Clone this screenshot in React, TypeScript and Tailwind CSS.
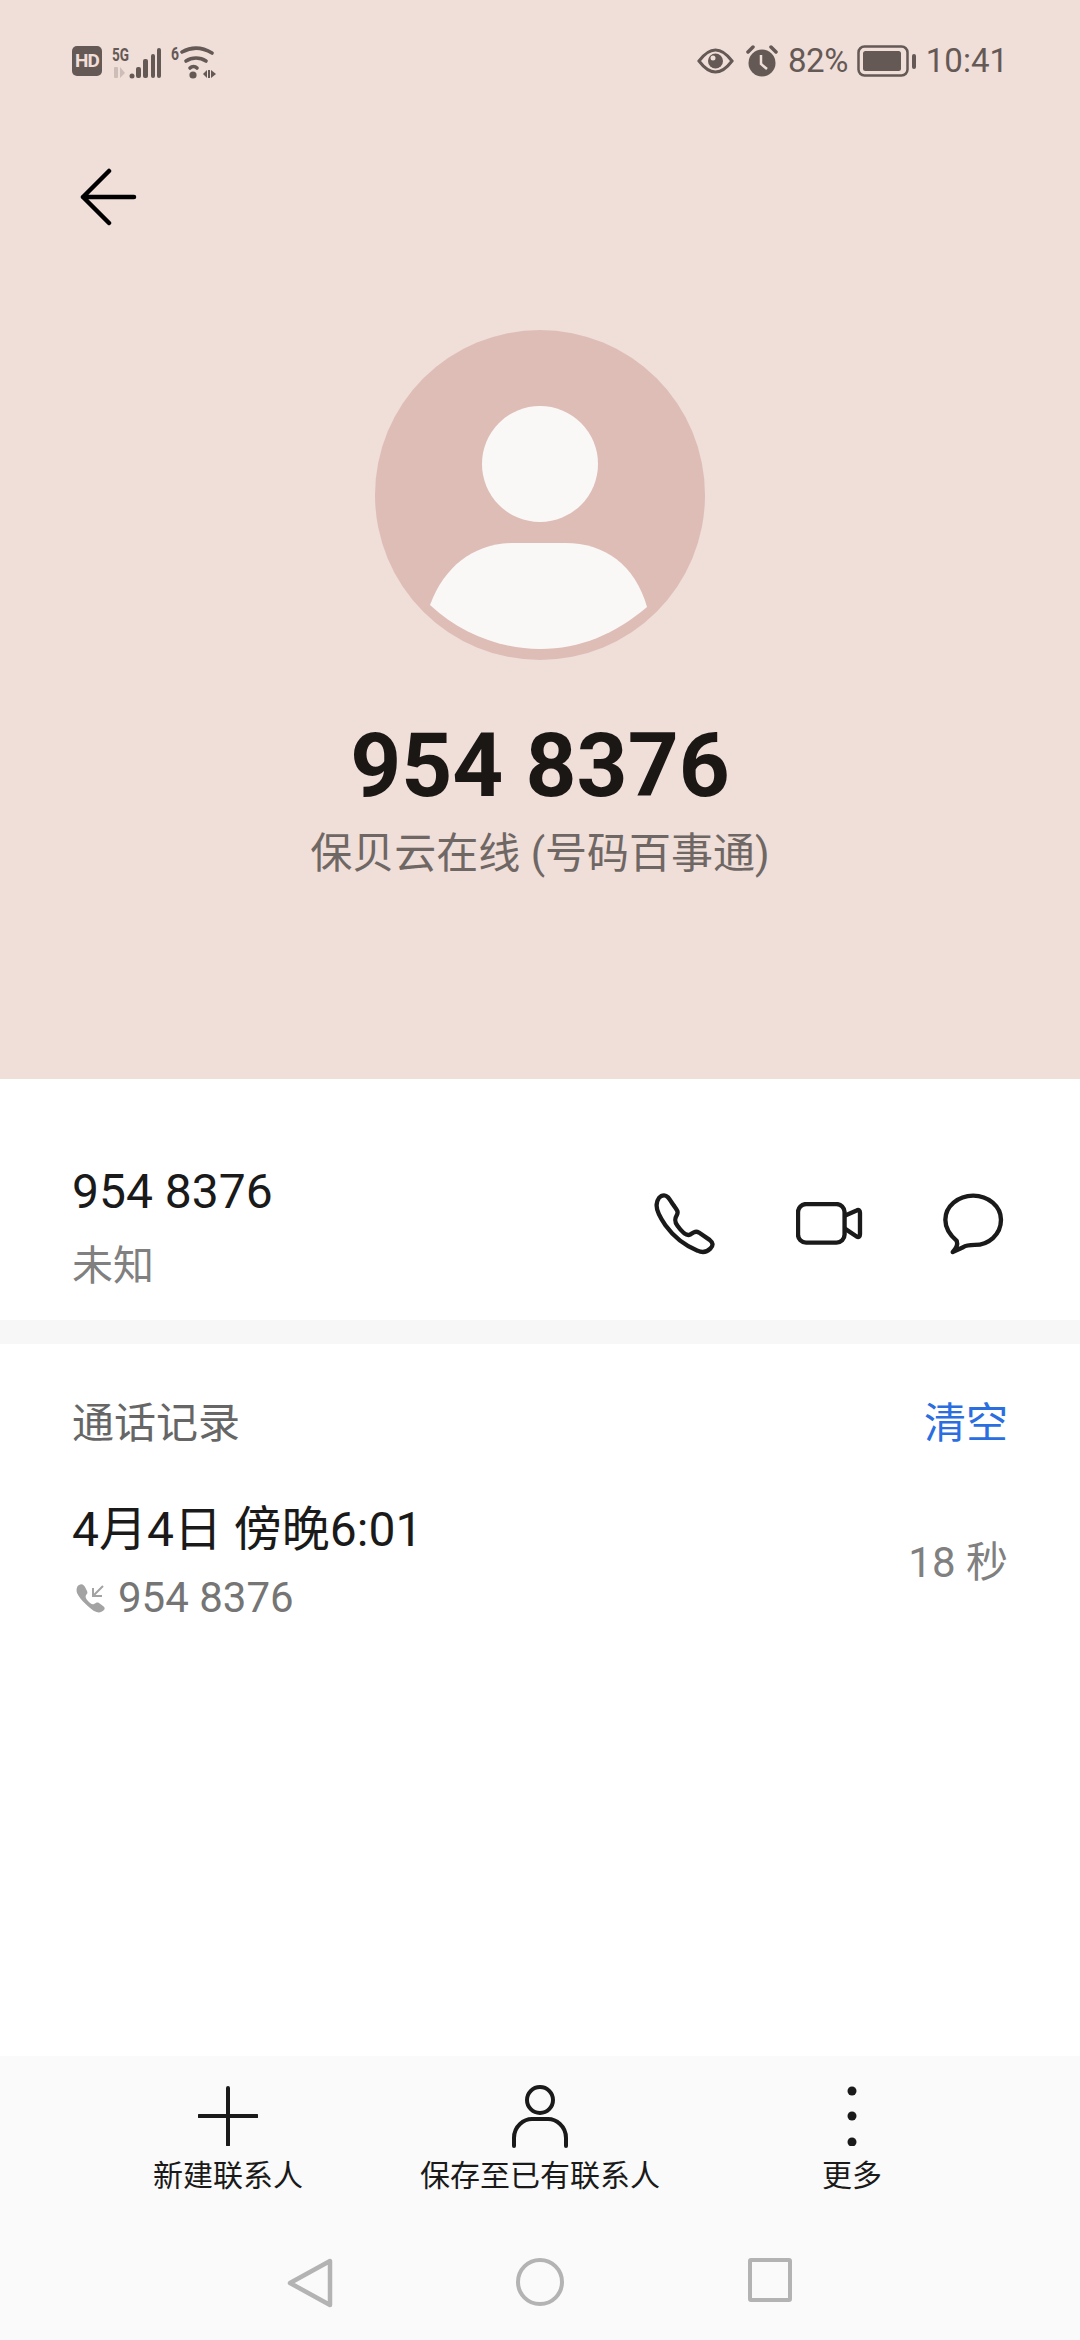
const font = { fontFamily: "Roboto, 'Noto Sans CJK SC', sans-serif" };

const StatusLeft = () => (
  <div className="flex items-center">
    <div className="w-[30px] h-[30px] rounded-[5px] bg-[#645955] text-[#f0ded9] text-[19px] leading-[30px] font-bold text-center tracking-[-1px]">
      HD
    </div>
    <svg width="50" height="38" viewBox="0 -4 50 38" className="ml-[10px]">
      <text x="0" y="15" fontSize="18" fontWeight="700" fill="#645955" textLength="17" lengthAdjust="spacingAndGlyphs">5G</text>
      <g fill="#cdbdb8">
        <rect x="2" y="21" width="4" height="11" rx="1" />
        <path d="M8 21v11l5-5z" />
      </g>
      <g fill="#645955">
        <circle cx="20" cy="30" r="2.500" />
        <rect x="24" y="21" width="5" height="11" rx="2" />
        <rect x="31" y="13" width="5" height="19" rx="2" />
        <rect x="39" y="8" width="4" height="24" rx="2" />
        <rect x="45" y="2" width="4" height="30" rx="2" />
      </g>
    </svg>
    <svg width="46" height="38" viewBox="0 -4 46 38" className="ml-[9px]">
      <text x="0" y="14" fontSize="18" fontWeight="700" fill="#645955" textLength="8" lengthAdjust="spacingAndGlyphs">6</text>
      <g fill="none" stroke="#645955" strokeWidth="3.600" strokeLinecap="round">
        <path d="M11 6c9-5 20-5 30 1" />
        <path d="M15 15c6-4 14-4 20 0" />
        <path d="M19 22c2-2 5-2 7 0" />
      </g>
      <circle cx="22" cy="29" r="3.600" fill="#645955" />
      <path d="M32 28l4-4v8zM37 24h2v8h-2zM40 24l5 4-5 4z" fill="#645955" />
    </svg>
  </div>
);

const StatusRight = () => (
  <div className="flex items-center text-[33px] leading-[40px] text-[#645955]">
    <svg width="37" height="26" viewBox="0 0 37 26">
      <path d="M2 13C8 5 13 2 18.500 2S29 5 35 13c-6 8-11 11-16.500 11S8 21 2 13z" fill="none" stroke="#645955" strokeWidth="3" />
      <circle cx="18.500" cy="13" r="7.500" fill="#645955" />
      <circle cx="16" cy="10" r="2.500" fill="#f0ded9" />
    </svg>
    <svg width="32" height="32" viewBox="0 0 32 32" className="ml-[12px]">
      <circle cx="16" cy="18" r="13.500" fill="#645955" />
      <path d="M15 10v9l6 5" fill="none" stroke="#f0ded9" strokeWidth="2.500" />
      <path d="M2 7l5-5M30 7l-5-5" stroke="#645955" strokeWidth="3.500" strokeLinecap="round" />
    </svg>
    <span className="ml-[10px] tracking-[-0.5px]">82%</span>
    <svg width="60" height="32" viewBox="0 0 60 32" className="ml-[9px]">
      <rect x="1.500" y="1.500" width="49" height="29" rx="6" fill="none" stroke="#645955" strokeWidth="2.500" />
      <rect x="6" y="6" width="38" height="20" rx="2.500" fill="#645955" />
      <rect x="55" y="9" width="4" height="15" rx="2" fill="#645955" />
    </svg>
    <span className="ml-[9px]">10:41</span>
  </div>
);

const BackArrow = () => (
  <svg width="60" height="60" viewBox="0 0 60 60" fill="none" stroke="#000" strokeWidth="4.500" strokeLinecap="round" strokeLinejoin="round">
    <path d="M3 30h51M29 4L3 30l26 26" />
  </svg>
);

const Avatar = () => (
  <svg width="330" height="330" viewBox="0 0 330 330">
    <circle cx="165" cy="165" r="165" fill="#dfbdb7" />
    <circle cx="165" cy="134" r="58" fill="#faf8f7" />
    <path d="M55 275C70 235 100 213 140 213H190C230 213 260 235 272 277C240 304 205 319 165 319C125 319 85 303 55 275Z" fill="#faf8f7" />
  </svg>
);

const lineIcon = { fill: "none", stroke: "#1a1a1a", strokeWidth: 13, strokeLinejoin: "round" as const, strokeLinecap: "round" as const };

const PhoneIcon = () => (
  <svg width="62" height="62" viewBox="100 100 185 185" {...lineIcon}>
    <path d="M130 107C142 107 148 122 158 136C168 150 174 156 168 166C162 176 160 184 170 198C180 212 196 230 208 224C218 218 224 212 234 218L266 240C276 248 278 256 268 266C258 276 246 280 230 272C196 258 160 232 134 196C116 170 106 150 108 134C110 118 118 107 130 107Z" />
  </svg>
);

const VideoIcon = () => (
  <svg width="67" height="43" viewBox="525 128 200 128" {...lineIcon}>
    <rect x="531" y="134" width="139" height="115" rx="24" />
    <path d="M672 168L706 153C712 150 716 153 716 160V224C716 231 712 234 706 231L672 208" />
  </svg>
);

const MessageIcon = () => (
  <svg width="62" height="62" viewBox="965 100 185 185" {...lineIcon}>
    <path d="M1006 243C985 225 972 205 972 180C972 140 1010 108 1055 108C1100 108 1138 140 1138 180C1138 225 1100 255 1060 255C1045 255 1035 255 1025 262L994 276C1004 266 1010 255 1006 243Z" />
  </svg>
);

const IncomingIcon = () => (
  <svg width="30" height="30" viewBox="0 0 30 30" className="ml-[3px]">
    <path d="M4 2C7 0 9 2 10 4l2 4c1 2 0 3-1 4-1 2 0 4 2 6s4 4 6 3c2-1 3-2 5-1l4 3c2 1 2 3 1 4-3 3-6 3-10 1C14 24 6 18 2 10 1 6 2 3 4 2z" fill="#a3a3a3" />
    <path d="M28 3L18 13M18 5v8h9" fill="none" stroke="#a3a3a3" strokeWidth="2" />
  </svg>
);

const actions = [
  {
    label: "新建联系人",
    icon: (
      <svg width="60" height="60" viewBox="0 0 60 60" stroke="#1a1a1a" strokeWidth="4" strokeLinecap="round">
        <path d="M30 2v57M1 30h58" />
      </svg>
    ),
  },
  {
    label: "保存至已有联系人",
    icon: (
      <svg width="56" height="64" viewBox="0 0 56 64" fill="none" stroke="#1a1a1a" strokeWidth="4" strokeLinecap="round">
        <circle cx="28" cy="16" r="13" />
        <path d="M2 62V54C2 42 12 35 20 35H36C44 35 54 42 54 54V62" />
      </svg>
    ),
  },
  {
    label: "更多",
    icon: (
      <svg width="10" height="60" viewBox="0 0 10 60" fill="#1a1a1a">
        <circle cx="5" cy="5" r="4.500" />
        <circle cx="5" cy="30" r="4.500" />
        <circle cx="5" cy="56" r="4.500" />
      </svg>
    ),
  },
];

export default function App() {
  return (
    <div style={font} className="w-[1080px] h-[2340px] flex flex-col bg-white overflow-hidden">
      <div className="h-[1079px] bg-[#f0ded9] flex flex-col">
        <div className="flex justify-between items-center px-[72px] h-[40px] mt-[41px]">
          <StatusLeft />
          <StatusRight />
        </div>
        <div className="ml-[80px] mt-[86px]">
          <BackArrow />
        </div>
        <div className="flex justify-center mt-[103px]">
          <Avatar />
        </div>
        <h1 className="mt-[56px] text-center text-[89px] leading-[100px] font-bold text-[#1a1715]">954 8376</h1>
        <p className="mt-[10px] text-center text-[42px] leading-[56px] text-[#6f6764]">保贝云在线 (号码百事通)</p>
      </div>

      <div className="h-[241px] pl-[72px] pr-[75px] flex items-center justify-between">
        <div className="mt-[54px]">
          <div className="text-[48px] leading-[64px] text-[#1a1a1a]">954 8376</div>
          <div className="mt-[14px] text-[41px] leading-[56px] text-[#808080]">未知</div>
        </div>
        <div className="flex items-center gap-[80px] mt-[48px]">
          <PhoneIcon />
          <VideoIcon />
          <MessageIcon />
        </div>
      </div>

      <div className="h-[24px] bg-[#f7f7f7]" />

      <div className="flex-1 px-[72px]">
        <div className="flex justify-between items-center mt-[52px] text-[42px] leading-[56px]">
          <span className="text-[#666666]">通话记录</span>
          <span className="text-[#2a6ee0]">清空</span>
        </div>
        <div className="flex justify-between items-center mt-[48px]">
          <div>
            <div className="text-[48px] leading-[60px] text-[#1a1a1a]">4月4日 傍晚6:01</div>
            <div className="flex items-center mt-[10px]">
              <IncomingIcon />
              <span className="ml-[13px] text-[42px] leading-[56px] text-[#757575]">954 8376</span>
            </div>
          </div>
          <span className="text-[42px] leading-[56px] text-[#808080]">18 秒</span>
        </div>
      </div>

      <div className="h-[284px] bg-[#fafafa] flex flex-col">
        <div className="grid grid-cols-3 px-[72px] pt-[28px]">
          {actions.map((a) => (
            <div key={a.label} className="flex flex-col items-center">
              <div className="h-[64px] flex items-center">{a.icon}</div>
              <span className="mt-[6px] text-[30px] leading-[44px] text-[#1a1a1a]">{a.label}</span>
            </div>
          ))}
        </div>
        <div className="grid grid-cols-3 px-[195px] mt-[60px]">
          <div className="flex justify-center">
            <svg width="48" height="50" viewBox="0 0 48 50" fill="none" stroke="#b3b3b3" strokeWidth="4.500" strokeLinejoin="round">
              <path d="M44 3V47L4 25Z" />
            </svg>
          </div>
          <div className="flex justify-center">
            <div className="w-[48px] h-[48px] rounded-full border-[4.5px] border-[#b3b3b3]" />
          </div>
          <div className="flex justify-center">
            <div className="w-[44px] h-[44px] rounded-[3px] border-[4.5px] border-[#b3b3b3]" />
          </div>
        </div>
      </div>
    </div>
  );
}
